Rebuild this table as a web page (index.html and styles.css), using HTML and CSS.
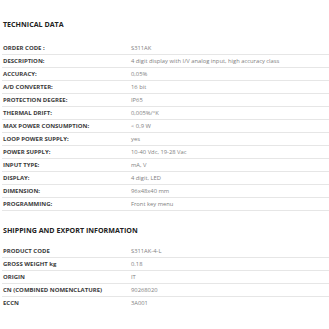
FILE: index.html
```html
<!DOCTYPE html>
<html>
<head>
<meta charset="utf-8">
<link rel="stylesheet" href="styles.css">
</head>
<body>
<div class="page">
  <h2 class="title first">TECHNICAL DATA</h2>
  <table class="spec">
    <tr><th>ORDER CODE :</th><td>S311AK</td></tr>
    <tr><th>DESCRIPTION:</th><td>4 digit display with I/V analog input, high accuracy class</td></tr>
    <tr><th>ACCURACY:</th><td>0,05%</td></tr>
    <tr><th>A/D CONVERTER:</th><td>16 bit</td></tr>
    <tr><th>PROTECTION DEGREE:</th><td>IP65</td></tr>
    <tr><th>THERMAL DRIFT:</th><td>0,005%/°K</td></tr>
    <tr><th>MAX POWER CONSUMPTION:</th><td>&lt; 0,9 W</td></tr>
    <tr><th>LOOP POWER SUPPLY:</th><td>yes</td></tr>
    <tr><th>POWER SUPPLY:</th><td>10-40 Vdc, 19-28 Vac</td></tr>
    <tr><th>INPUT TYPE:</th><td>mA, V</td></tr>
    <tr><th>DISPLAY:</th><td>4 digit, LED</td></tr>
    <tr><th>DIMENSION:</th><td>96x48x40 mm</td></tr>
    <tr><th>PROGRAMMING:</th><td>Front key menu</td></tr>
  </table>
  <h2 class="title second">SHIPPING AND EXPORT INFORMATION</h2>
  <table class="spec ship">
    <tr><th>PRODUCT CODE</th><td>S311AK-4-L</td></tr>
    <tr><th>GROSS WEIGHT kg</th><td>0.18</td></tr>
    <tr><th>ORIGIN</th><td>IT</td></tr>
    <tr><th>CN (COMBINED NOMENCLATURE)</th><td>90268020</td></tr>
    <tr><th>ECCN</th><td>3A001</td></tr>
  </table>
</div>
</body>
</html>
```
FILE: styles.css
```css
html, body {
  margin: 0;
  padding: 0;
  background: #fff;
}
.page {
  padding: 0 0 0 2px;
  font-family: "Open Sans", "DejaVu Sans", sans-serif;
}
.title {
  margin: 0;
  font-size: 7.1px;
  font-weight: 700;
  color: #222;
  line-height: 10px;
  padding-left: 1px;
}
.title.first {
  padding-top: 19px;
  padding-bottom: 13px;
}
.title.second {
  padding-top: 14px;
  padding-bottom: 10px;
}
.spec {
  border-collapse: collapse;
  width: 327px;
}
.spec th, .spec td {
  height: 12px;
  padding: 0 0 0 1px;
  border-bottom: 1px solid #e6e6e6;
  text-align: left;
  vertical-align: middle;
  line-height: 12px;
  white-space: nowrap;
}
.spec th {
  width: 127px;
  font-size: 6px;
  font-weight: 700;
  color: #3a3a3a;
}
.spec td {
  font-size: 5.8px;
  font-weight: 400;
  color: #808080;
}
.ship tr:last-child th, .ship tr:last-child td {
  border-bottom: none;
}
```
